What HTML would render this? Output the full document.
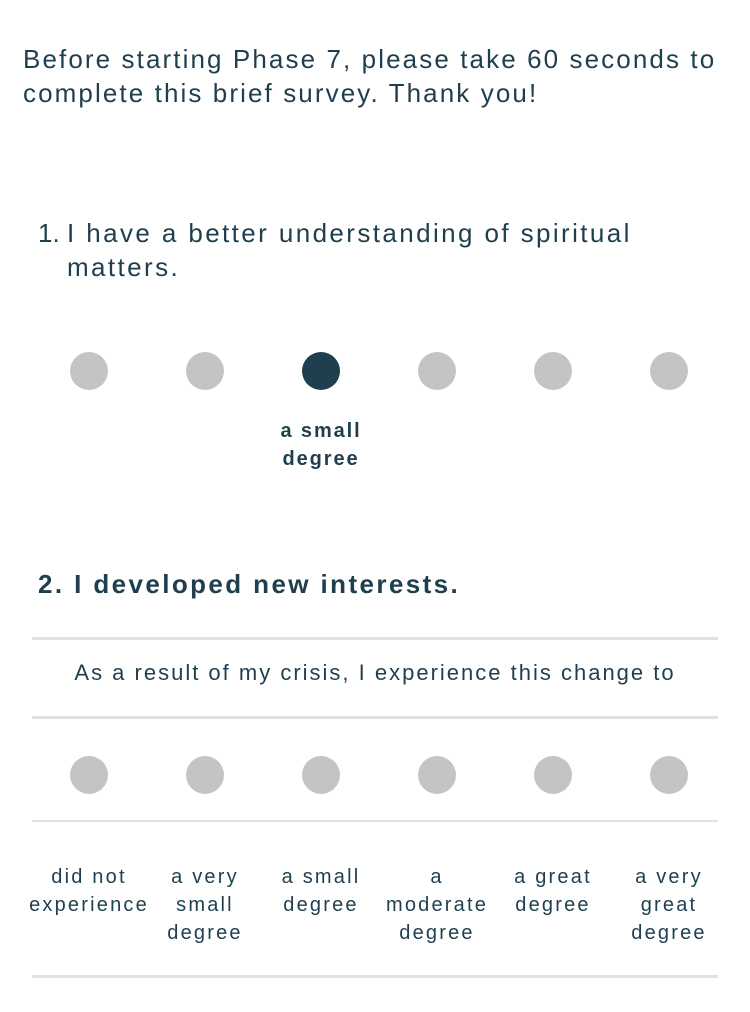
<!DOCTYPE html>
<html><head><meta charset="utf-8"><style>
body{margin:0;width:750px;height:1012px;background:#fff;font-family:"Liberation Sans",sans-serif;color:#1f3f4f;position:relative;overflow:hidden}
.a{position:absolute}
.t{font-size:26px;line-height:34px;white-space:nowrap}
.dot{position:absolute;width:38px;height:38px;border-radius:50%;background:#c4c4c4}
.line{position:absolute;left:32px;width:686px;background:#dfe1e4}
.lab{position:absolute;width:140px;text-align:center;font-size:20px;line-height:28px;letter-spacing:2.2px;white-space:nowrap}
</style></head><body>
<div class="a t" style="left:23px;top:42px;letter-spacing:2.1px">Before starting Phase 7, please take 60 seconds to<br>complete this brief survey. Thank you!</div>
<div class="a t" style="left:38px;top:216px">1.</div>
<div class="a t" style="left:67px;top:216px;letter-spacing:2.4px">I have a better understanding of spiritual<br>matters.</div>
<div class="dot" style="left:70px;top:352px"></div>
<div class="dot" style="left:186px;top:352px"></div>
<div class="dot" style="left:302px;top:352px;background:#1f3f4f"></div>
<div class="dot" style="left:418px;top:352px"></div>
<div class="dot" style="left:534px;top:352px"></div>
<div class="dot" style="left:650px;top:352px"></div>
<div class="lab" style="left:251px;top:417px;font-weight:bold;letter-spacing:1.9px">a small<br>degree</div>
<div class="a t" style="left:38px;top:567px;font-weight:bold;letter-spacing:2.4px">2. I developed new interests.</div>
<div class="line" style="top:637px;height:3px"></div>
<div class="a" style="left:32px;width:686px;top:658px;text-align:center;font-size:22px;line-height:30px;letter-spacing:2px;white-space:nowrap">As a result of my crisis, I experience this change to</div>
<div class="line" style="top:716px;height:3px"></div>
<div class="dot" style="left:70px;top:756px"></div>
<div class="dot" style="left:186px;top:756px"></div>
<div class="dot" style="left:302px;top:756px"></div>
<div class="dot" style="left:418px;top:756px"></div>
<div class="dot" style="left:534px;top:756px"></div>
<div class="dot" style="left:650px;top:756px"></div>
<div class="line" style="top:820px;height:2px"></div>
<div class="lab" style="left:19px;top:863px">did not<br>experience</div>
<div class="lab" style="left:135px;top:863px">a very<br>small<br>degree</div>
<div class="lab" style="left:251px;top:863px">a small<br>degree</div>
<div class="lab" style="left:367px;top:863px">a<br>moderate<br>degree</div>
<div class="lab" style="left:483px;top:863px">a great<br>degree</div>
<div class="lab" style="left:599px;top:863px">a very<br>great<br>degree</div>
<div class="line" style="top:975px;height:3px"></div>
</body></html>
